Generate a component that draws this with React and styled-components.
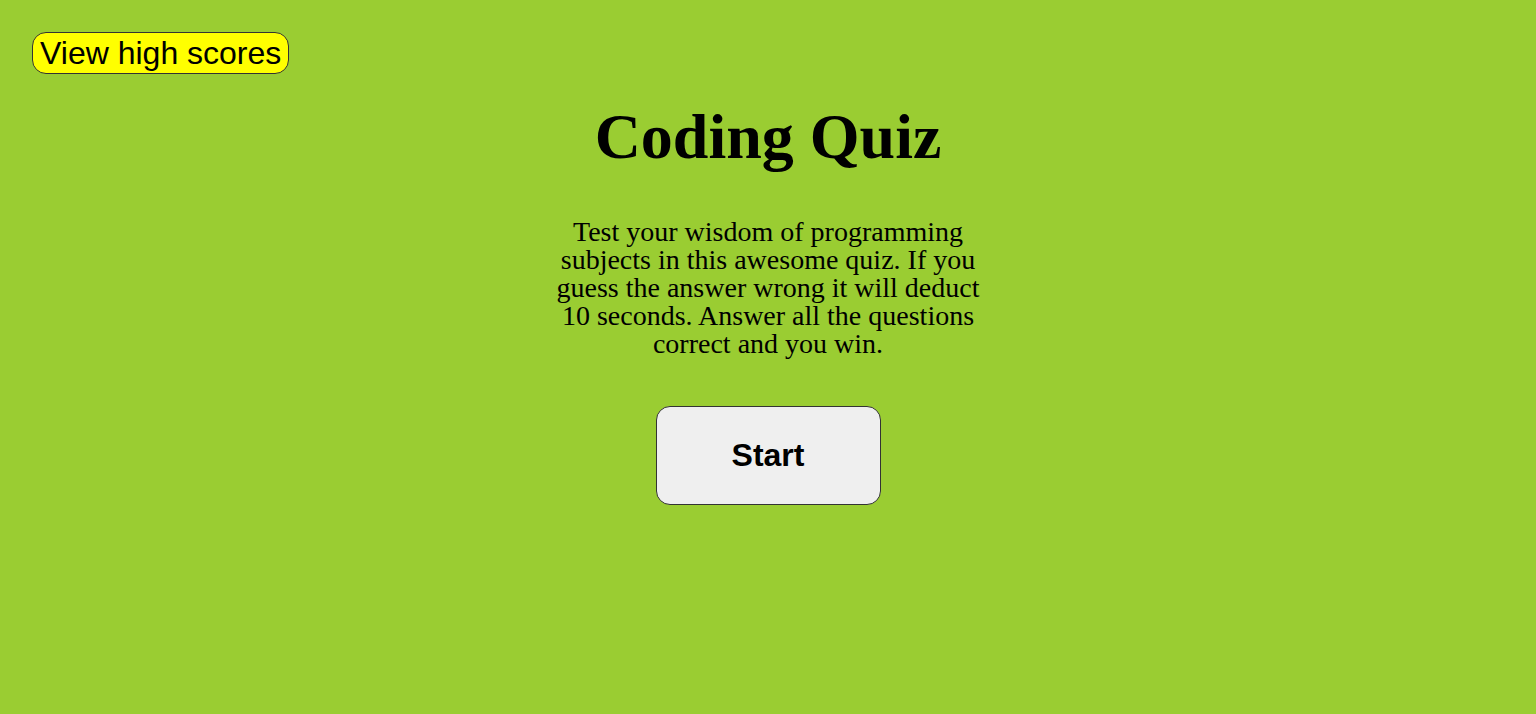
import styled, { createGlobalStyle } from "styled-components";

const GlobalStyle = createGlobalStyle`
  html, body {
    margin: 0;
    padding: 0;
    background-color: yellowgreen;
    min-height: 100%;
  }
`;

const Page = styled.div`
  min-height: 714px;
  padding: 32px;
  box-sizing: border-box;
  background-color: yellowgreen;
  display: flex;
  flex-direction: column;
  align-items: flex-start;
`;

const ScoresButton = styled.button`
  font-family: "Liberation Sans", Arial, sans-serif;
  font-size: 32px;
  line-height: 1;
  height: 42px;
  padding: 0 7px;
  background-color: yellow;
  color: #000;
  border: 1px solid #333;
  border-radius: 14px;
  cursor: pointer;
`;

const Main = styled.main`
  align-self: stretch;
  display: flex;
  flex-direction: column;
  align-items: center;
`;

const Title = styled.h1`
  font-family: "Liberation Serif", "Times New Roman", serif;
  font-size: 64px;
  font-weight: 700;
  margin: 28px 0 0;
  line-height: 1.1;
`;

const Intro = styled.p`
  font-family: "Liberation Serif", "Times New Roman", serif;
  font-size: 28px;
  line-height: 28px;
  width: 430px;
  text-align: center;
  margin: 46px 0 0;
`;

const StartButton = styled.button`
  font-family: "Liberation Sans", Arial, sans-serif;
  font-size: 32px;
  font-weight: 700;
  width: 225px;
  height: 99px;
  margin-top: 48px;
  background-color: #efefef;
  color: #000;
  border: 1px solid #333;
  border-radius: 14px;
  cursor: pointer;
`;

const App = () => {
  return (
    <>
      <GlobalStyle />
      <Page>
        <ScoresButton>View high scores</ScoresButton>
        <Main>
          <Title>Coding Quiz</Title>
          <Intro>
            Test your wisdom of programming subjects in this awesome quiz. If
            you guess the answer wrong it will deduct 10 seconds. Answer all the
            questions correct and you win.
          </Intro>
          <StartButton>Start</StartButton>
        </Main>
      </Page>
    </>
  );
};

export default App;
